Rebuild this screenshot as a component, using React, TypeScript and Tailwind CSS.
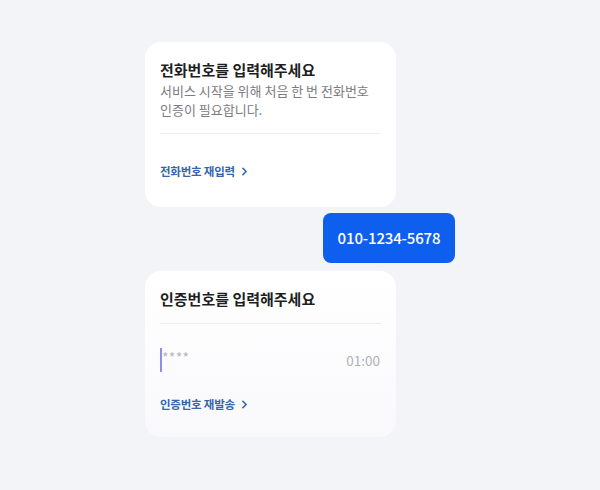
import { ChevronRight } from 'lucide-react';

const font = { fontFamily: '"Noto Sans CJK KR", "Noto Sans", sans-serif' };

function LinkRow({ label }: { label: string }) {
  return (
    <button className="flex items-center gap-[3px] text-[11.5px] font-bold text-[#3565ab] tracking-[-0.02em] leading-[16px]">
      {label}
      <ChevronRight size={13} strokeWidth={3} className="mt-px" />
    </button>
  );
}

export default function App() {
  return (
    <div className="w-[600px] h-[490px] bg-[#f3f4f8] overflow-hidden" style={font}>
      <div className="ml-[145px] pt-[42px] w-[310px] flex flex-col">
        {/* phone number request */}
        <div className="w-[251px] rounded-2xl bg-white px-[15px] pt-[18px] pb-[28px]">
          <h2 className="text-[15px] font-bold text-[#1d1e22] leading-[20px]">
            전화번호를 입력해주세요
          </h2>
          <p className="mt-[1px] text-[13px] text-[#7b7c80] leading-[19px]">
            서비스 시작을 위해 처음 한 번 전화번호
            <br />
            인증이 필요합니다.
          </p>
          <div className="mt-[14px] h-px bg-[#eeeef1]" />
          <div className="mt-[29px]">
            <LinkRow label="전화번호 재입력" />
          </div>
        </div>

        {/* user bubble */}
        <div className="self-end mt-[6px] h-[50px] w-[132px] rounded-lg bg-[#0f5fee] flex items-center justify-center text-white text-[15px] font-medium tracking-[-0.01em]">
          010-1234-5678
        </div>

        {/* verification code */}
        <div className="mt-[8px] w-[251px] rounded-2xl bg-gradient-to-b from-white to-[#f9f9fc] px-[15px] pt-[18px] pb-[25px]">
          <h2 className="text-[15px] font-bold text-[#1d1e22] leading-[20px]">
            인증번호를 입력해주세요
          </h2>
          <div className="mt-[14px] h-px bg-[#eeeef1]" />
          <div className="mt-[24px] flex items-center justify-between">
            <div className="flex items-start h-[24px]">
              <span className="w-[2px] h-[24px] bg-[#8d8fe0]" />
              <span className="text-[14px] text-[#b5b6bb] tracking-[0.02em] leading-[16px] mt-[1px]">****</span>
            </div>
            <span className="text-[13.5px] text-[#b0b1b6] mr-px">01:00</span>
          </div>
          <div className="mt-[24px]">
            <LinkRow label="인증번호 재발송" />
          </div>
        </div>
      </div>
    </div>
  );
}
